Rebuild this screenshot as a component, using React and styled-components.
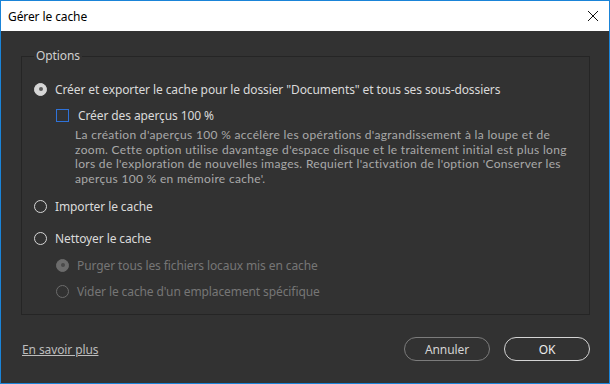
import React from "react";
import styled, { createGlobalStyle } from "styled-components";

const GlobalStyle = createGlobalStyle`
  html, body {
    margin: 0;
    padding: 0;
    background: #323232;
  }
  * {
    box-sizing: border-box;
  }
`;

const App = () => {
  return (
    <>
      <GlobalStyle />
      <Window>
        <TitleBar>
          <Title>Gérer le cache</Title>
          <CloseButton aria-label="Fermer">
            <svg width="12" height="12" viewBox="0 0 12 12">
              <path d="M1 1 L11 11 M11 1 L1 11" stroke="#111" strokeWidth="1" fill="none" />
            </svg>
          </CloseButton>
        </TitleBar>
        <Body>
          <Group>
            <Legend>Options</Legend>
            <OptionList>
              <Row $top={17}>
                <Radio $checked />
                <Label>
                  Créer et exporter le cache pour le dossier "Documents" et tous ses sous-dossiers
                </Label>
              </Row>
              <SubBlock>
                <Row $top={10}>
                  <Checkbox />
                  <Label>Créer des aperçus 100 %</Label>
                </Row>
                <Description>
                  La création d'aperçus 100 % accélère les opérations d'agrandissement à la loupe et de
                  <br />
                  zoom. Cette option utilise davantage d'espace disque et le traitement initial est plus long
                  <br />
                  lors de l'exploration de nouvelles images. Requiert l'activation de l'option 'Conserver les
                  <br />
                  aperçus 100 % en mémoire cache'.
                </Description>
              </SubBlock>
              <Row $top={12}>
                <Radio />
                <Label>Importer le cache</Label>
              </Row>
              <Row $top={16}>
                <Radio />
                <Label>Nettoyer le cache</Label>
              </Row>
              <SubBlock>
                <Row $top={11}>
                  <Radio $checked $disabled />
                  <Label $disabled>Purger tous les fichiers locaux mis en cache</Label>
                </Row>
                <Row $top={10}>
                  <Radio $disabled />
                  <Label $disabled>Vider le cache d'un emplacement spécifique</Label>
                </Row>
              </SubBlock>
            </OptionList>
          </Group>
          <Footer>
            <HelpLink href="#">En savoir plus</HelpLink>
            <Buttons>
              <Button>Annuler</Button>
              <Button $primary>OK</Button>
            </Buttons>
          </Footer>
        </Body>
      </Window>
    </>
  );
};

const Window = styled.div`
  width: 610px;
  height: 384px;
  border: 1px solid #1a84d8;
  background: #323232;
  display: flex;
  flex-direction: column;
  font-family: "Noto Sans", "Liberation Sans", sans-serif;
  font-size: 12px;
  letter-spacing: -0.1px;
`;

const TitleBar = styled.div`
  height: 30px;
  background: #ffffff;
  display: flex;
  align-items: center;
  justify-content: space-between;
  padding: 0 10px 0 7px;
  flex-shrink: 0;
`;

const Title = styled.span`
  color: #000;
  font-size: 12px;
`;

const CloseButton = styled.div`
  width: 12px;
  height: 12px;
  display: flex;
`;

const Body = styled.div`
  flex: 1;
  display: flex;
  flex-direction: column;
  padding: 17px 19px 0 20px;
`;

const Group = styled.fieldset`
  margin: 0;
  padding: 0 0 0 12px;
  border: 1px solid #252525;
  height: 267px;
`;

const Legend = styled.legend`
  margin-left: 0;
  padding: 0 2px;
  color: #cfcfcf;
  line-height: 16px;
  height: 16px;
`;

const OptionList = styled.div`
  display: flex;
  flex-direction: column;
`;

const SubBlock = styled.div`
  display: flex;
  flex-direction: column;
  padding-left: 22px;
`;

const Row = styled.div`
  display: flex;
  align-items: center;
  gap: 8px;
  height: 16px;
  margin-top: ${(p) => p.$top}px;
`;

const Radio = styled.span`
  width: 13px;
  height: 13px;
  border-radius: 50%;
  flex-shrink: 0;
  position: relative;
  border: 1.5px solid ${(p) => (p.$disabled ? "#6c6c6c" : "#d6d6d6")};
  background: ${(p) => (p.$checked ? (p.$disabled ? "#6c6c6c" : "#d6d6d6") : "transparent")};

  &::after {
    content: "";
    display: ${(p) => (p.$checked ? "block" : "none")};
    position: absolute;
    left: 50%;
    top: 50%;
    width: 4px;
    height: 4px;
    margin: -2px 0 0 -2px;
    border-radius: 50%;
    background: ${(p) => (p.$disabled ? "#4a4a4a" : "#5a5a5a")};
  }
`;

const Checkbox = styled.span`
  width: 13px;
  height: 13px;
  flex-shrink: 0;
  border: 1px solid #2f72d8;
  margin-right: 1px;
`;

const Label = styled.span`
  color: ${(p) => (p.$disabled ? "#767676" : "#dadada")};
  white-space: nowrap;
`;

const Description = styled.p`
  margin: 5px 0 0 19px;
  color: #a9a9a9;
  font-family: Lato, "Noto Sans", sans-serif;
  font-size: 12px;
  letter-spacing: 0.32px;
  line-height: 14.5px;
  white-space: nowrap;
`;

const Footer = styled.div`
  display: flex;
  align-items: center;
  justify-content: space-between;
  margin-top: 22px;
  height: 24px;
`;

const HelpLink = styled.a`
  color: #bdbdbd;
  text-decoration: underline;
  margin-left: 1px;
`;

const Buttons = styled.div`
  display: flex;
  gap: 14px;
`;

const Button = styled.button`
  width: 86px;
  height: 24px;
  border-radius: 12px;
  background: transparent;
  font-family: inherit;
  font-size: 12px;
  letter-spacing: inherit;
  border: 1px solid ${(p) => (p.$primary ? "#d4d4d4" : "#7c7c7c")};
  color: ${(p) => (p.$primary ? "#ececec" : "#d4d4d4")};
  padding: 0;
`;

export default App;
